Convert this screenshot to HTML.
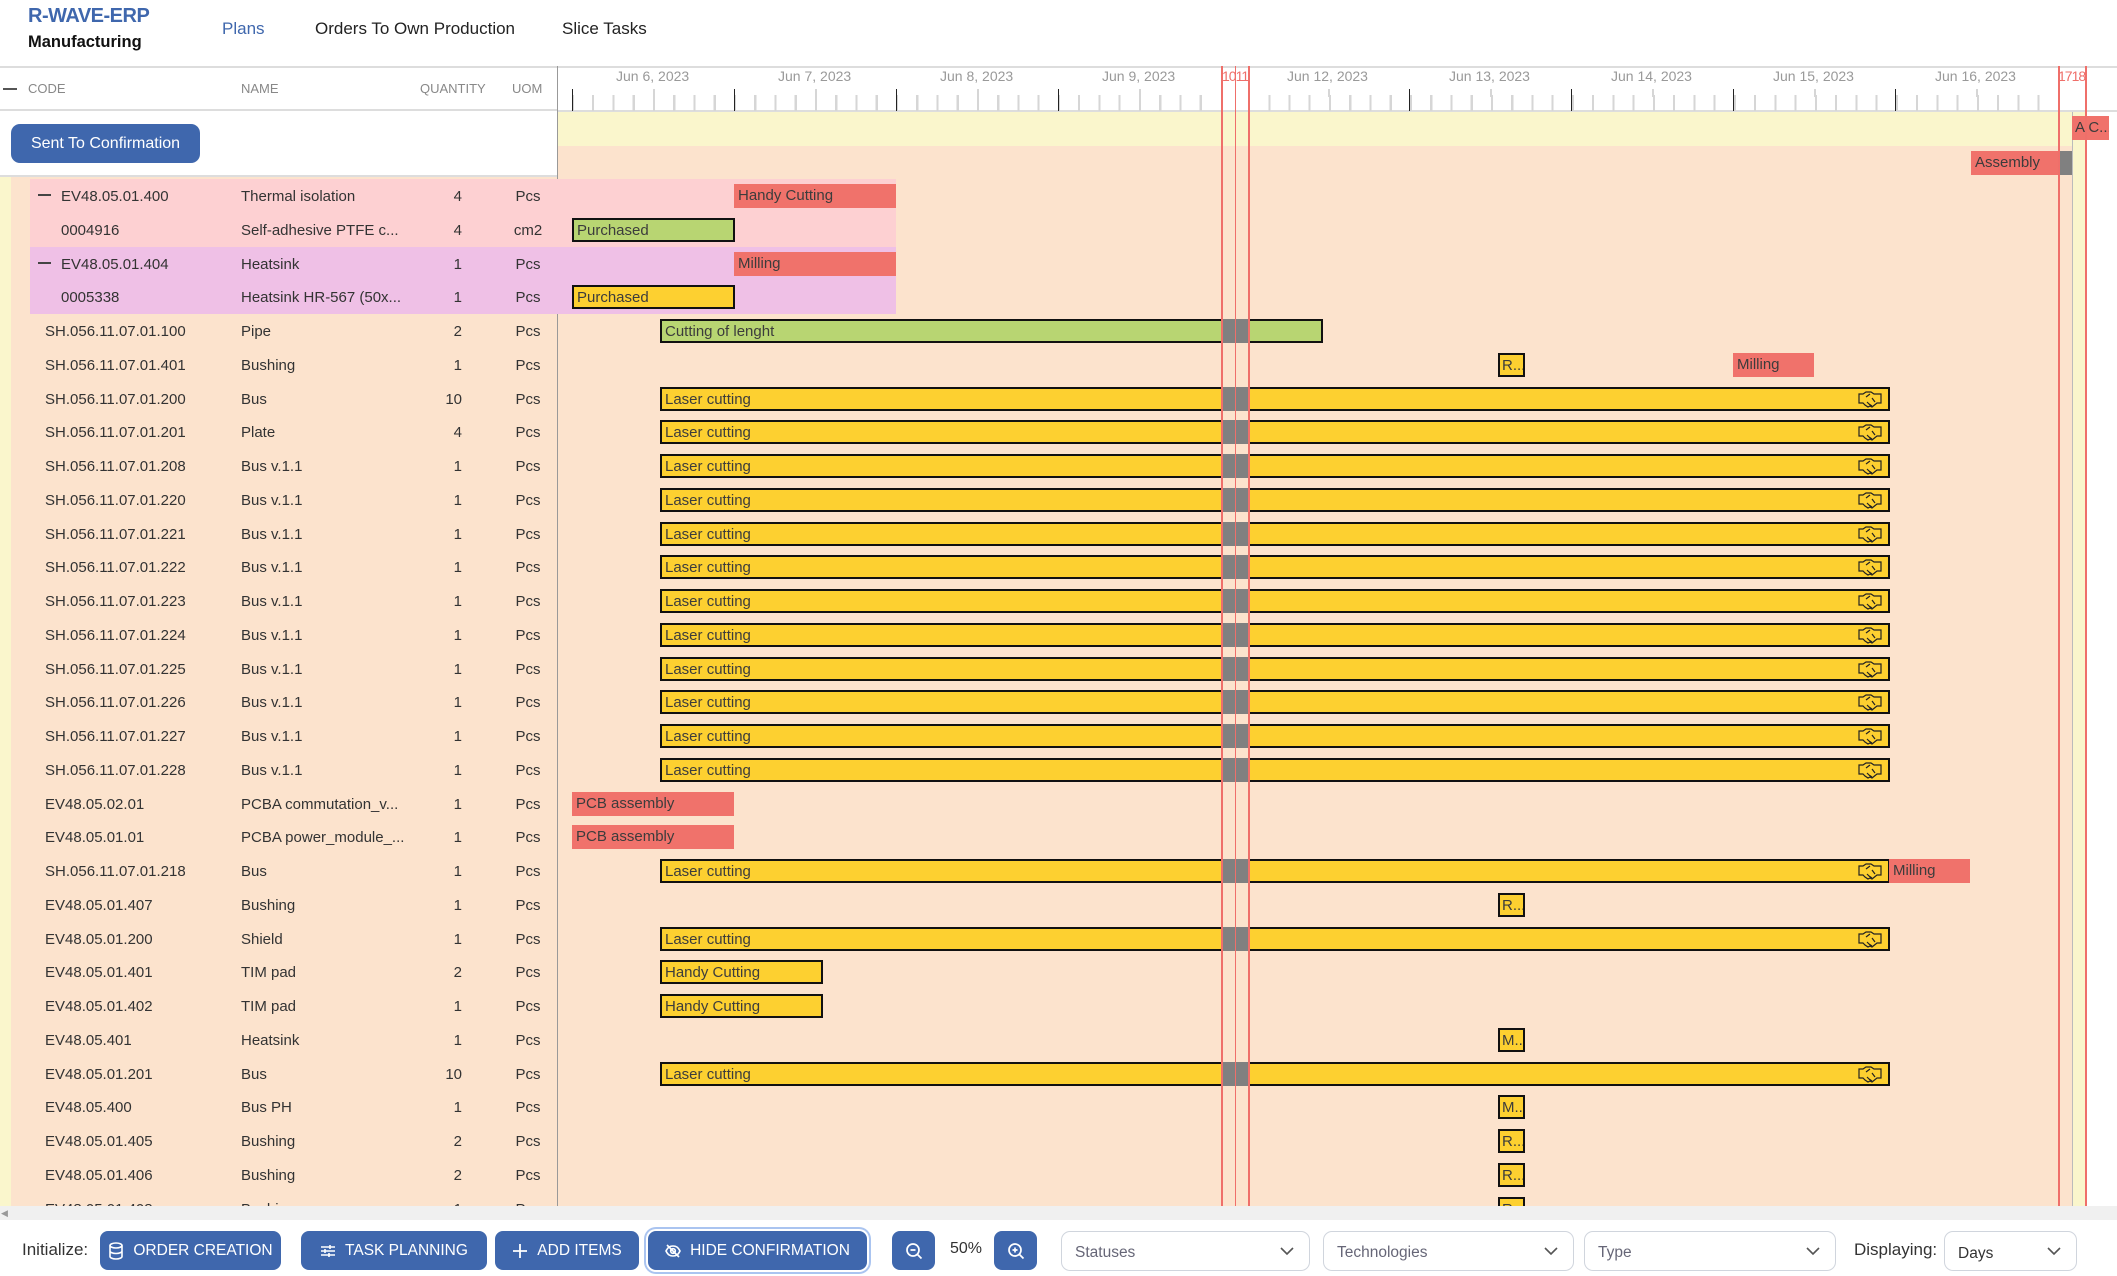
<!DOCTYPE html>
<html><head><meta charset="utf-8"><style>
*{box-sizing:border-box;margin:0;padding:0}
body{width:2117px;height:1276px;overflow:hidden;background:#fff;font-family:"Liberation Sans",sans-serif;position:relative;color:#333}
.a{position:absolute;white-space:nowrap}
.nav{font-size:17px;color:#222;top:19px}
.hl{font-size:13px;color:#888;top:81px}
.row{position:absolute;left:0;width:557px;height:33.75px;font-size:15px;color:#333}
.row span{position:absolute;top:9px;white-space:nowrap}
.c{left:45px}.cd{left:61px}.n{left:241px}.q{right:95px;text-align:right}.u{left:528px;transform:translateX(-50%)}
.bar{position:absolute;height:24px;font-size:15px;color:#3c3c3c;padding:3px 0 0 4px;white-space:nowrap;overflow:hidden}
.y{background:#fdd030;border:2px solid #111;padding-top:2px;padding-left:3px}
.g{background:#b8d572;border:2px solid #111;padding-top:2px;padding-left:3px}
.r{background:#f0726b}
.gb{position:absolute;top:-2px;height:24px;left:730px;width:27px;background:#808080}
.hs{position:absolute;right:6px;top:2px}
.btn{position:absolute;top:1231px;height:39px;background:#3f67ad;color:#fff;border-radius:8px;font-size:15.5px;font-weight:500;display:flex;align-items:center;justify-content:center;gap:9px;text-transform:uppercase}
.sel{position:absolute;top:1231px;height:40px;border:1.5px solid #d0d5dd;border-radius:9px;font-size:15.5px;color:#667;padding:12px 0 0 13px}
.sel svg{position:absolute;right:14px;top:13px}
.vl{position:absolute;top:66px;height:1140px;width:2px;background:#ef6f6a}
</style></head><body>
<div class="a" style="left:28px;top:5px;font-size:20px;font-weight:bold;color:#3f67ad;letter-spacing:-0.5px">R-WAVE-ERP</div>
<div class="a" style="left:28px;top:33px;font-size:16.5px;font-weight:bold;color:#111">Manufacturing</div>
<div class="a nav" style="left:222px;color:#3f67ad">Plans</div>
<div class="a nav" style="left:315px">Orders To Own Production</div>
<div class="a nav" style="left:562px">Slice Tasks</div>
<div class="a" style="left:0;top:66px;width:2117px;height:2px;background:#ddd"></div>
<div class="a" style="left:3px;top:88px;width:14px;height:2px;background:#555"></div>
<div class="a hl" style="left:28px">CODE</div>
<div class="a hl" style="left:241px">NAME</div>
<div class="a hl" style="left:420px">QUANTITY</div>
<div class="a hl" style="left:512px">UOM</div>
<div class="a" style="left:0;top:109px;width:557px;height:2px;background:#ddd"></div>
<div class="a" style="left:11px;top:124px;width:189px;height:39px;background:#3f67ad;border-radius:9px;color:#fff;font-size:16px;text-align:center;line-height:39px">Sent To Confirmation</div>
<div class="a" style="left:0;top:175px;width:557px;height:2px;background:#ddd"></div>
<div class="a" style="left:0;top:177px;width:11px;height:1029px;background:#faf6cc"></div>
<div class="a" style="left:11px;top:177px;width:546px;height:1029px;background:#fce3cd"></div>
<div class="a" style="left:558px;top:112px;width:1514px;height:34px;background:#faf6cc"></div>
<div class="a" style="left:558px;top:146px;width:1514px;height:1060px;background:#fce3cd"></div>
<div class="a" style="left:2072px;top:112px;width:14px;height:1094px;background:#faf6cc;border-left:1px solid #bbb"></div>
<div class="a" style="left:557px;top:66px;width:1px;height:1140px;background:#999"></div>
<div class="a" style="left:558px;top:110px;width:1559px;height:2px;background:#ddd"></div>
<div class="a" style="left:572px;top:95px;width:648px;height:16px;background:repeating-linear-gradient(to right,#d6d6d6 0 2px,transparent 2px 20.25px)"></div>
<div class="a" style="left:1248px;top:95px;width:810px;height:16px;background:repeating-linear-gradient(to right,#d6d6d6 0 2px,transparent 2px 20.25px)"></div>
<div class="a" style="left:572px;top:89px;width:1px;height:22px;background:#222"></div>
<div class="a" style="left:734px;top:89px;width:1px;height:22px;background:#222"></div>
<div class="a" style="left:896px;top:89px;width:1px;height:22px;background:#222"></div>
<div class="a" style="left:1058px;top:89px;width:1px;height:22px;background:#222"></div>
<div class="a" style="left:1409px;top:89px;width:1px;height:22px;background:#222"></div>
<div class="a" style="left:1571px;top:89px;width:1px;height:22px;background:#222"></div>
<div class="a" style="left:1733px;top:89px;width:1px;height:22px;background:#222"></div>
<div class="a" style="left:1895px;top:89px;width:1px;height:22px;background:#222"></div>
<div class="a" style="left:653px;top:89px;width:2px;height:8px;background:#d6d6d6"></div>
<div class="a" style="left:815px;top:89px;width:2px;height:8px;background:#d6d6d6"></div>
<div class="a" style="left:977px;top:89px;width:2px;height:8px;background:#d6d6d6"></div>
<div class="a" style="left:1139px;top:89px;width:2px;height:8px;background:#d6d6d6"></div>
<div class="a" style="left:1328px;top:89px;width:2px;height:8px;background:#d6d6d6"></div>
<div class="a" style="left:1490px;top:89px;width:2px;height:8px;background:#d6d6d6"></div>
<div class="a" style="left:1652px;top:89px;width:2px;height:8px;background:#d6d6d6"></div>
<div class="a" style="left:1814px;top:89px;width:2px;height:8px;background:#d6d6d6"></div>
<div class="a" style="left:1976px;top:89px;width:2px;height:8px;background:#d6d6d6"></div>
<div class="a" style="top:68px;left:0;width:2117px;height:20px;font-size:14px;color:#999">
<span class="a" style="left:616px">Jun 6, 2023</span>
<span class="a" style="left:778px">Jun 7, 2023</span>
<span class="a" style="left:940px">Jun 8, 2023</span>
<span class="a" style="left:1102px">Jun 9, 2023</span>
<span class="a" style="left:1287px">Jun 12, 2023</span>
<span class="a" style="left:1449px">Jun 13, 2023</span>
<span class="a" style="left:1611px">Jun 14, 2023</span>
<span class="a" style="left:1773px">Jun 15, 2023</span>
<span class="a" style="left:1935px">Jun 16, 2023</span>
<span class="a" style="left:1222px;color:#ef6f6a;letter-spacing:-1px">1011</span>
<span class="a" style="left:2058px;color:#ef6f6a;letter-spacing:-1px">1718</span>
</div>
<div class="a" style="left:0;top:177px;width:2117px;height:1029px;overflow:hidden">
<div style="position:absolute;left:0;top:2px;width:2117px">
<div class="a" style="left:30px;top:0;width:866px;height:67.5px;background:#fdd0d2"></div>
<div class="a" style="left:30px;top:67.5px;width:866px;height:67.5px;background:#efc0e6"></div>
<div class="row" style="top:0"><div class="a" style="left:38px;top:15px;width:13px;height:2px;background:#444"></div><span class="cd">EV48.05.01.400</span><span class="n">Thermal isolation</span><span class="q">4</span><span class="u">Pcs</span></div>
<div class="row" style="top:33.75px"><span class="cd">0004916</span><span class="n">Self-adhesive PTFE c...</span><span class="q">4</span><span class="u">cm2</span></div>
<div class="row" style="top:67.5px"><div class="a" style="left:38px;top:15px;width:13px;height:2px;background:#444"></div><span class="cd">EV48.05.01.404</span><span class="n">Heatsink</span><span class="q">1</span><span class="u">Pcs</span></div>
<div class="row" style="top:101.25px"><span class="cd">0005338</span><span class="n">Heatsink HR-567 (50x...</span><span class="q">1</span><span class="u">Pcs</span></div>
<div class="row" style="top:135px"><span class="c">SH.056.11.07.01.100</span><span class="n">Pipe</span><span class="q">2</span><span class="u">Pcs</span></div>
<div class="row" style="top:168.75px"><span class="c">SH.056.11.07.01.401</span><span class="n">Bushing</span><span class="q">1</span><span class="u">Pcs</span></div>
<div class="row" style="top:202.5px"><span class="c">SH.056.11.07.01.200</span><span class="n">Bus</span><span class="q">10</span><span class="u">Pcs</span></div>
<div class="row" style="top:236.25px"><span class="c">SH.056.11.07.01.201</span><span class="n">Plate</span><span class="q">4</span><span class="u">Pcs</span></div>
<div class="row" style="top:270px"><span class="c">SH.056.11.07.01.208</span><span class="n">Bus v.1.1</span><span class="q">1</span><span class="u">Pcs</span></div>
<div class="row" style="top:303.75px"><span class="c">SH.056.11.07.01.220</span><span class="n">Bus v.1.1</span><span class="q">1</span><span class="u">Pcs</span></div>
<div class="row" style="top:337.5px"><span class="c">SH.056.11.07.01.221</span><span class="n">Bus v.1.1</span><span class="q">1</span><span class="u">Pcs</span></div>
<div class="row" style="top:371.25px"><span class="c">SH.056.11.07.01.222</span><span class="n">Bus v.1.1</span><span class="q">1</span><span class="u">Pcs</span></div>
<div class="row" style="top:405px"><span class="c">SH.056.11.07.01.223</span><span class="n">Bus v.1.1</span><span class="q">1</span><span class="u">Pcs</span></div>
<div class="row" style="top:438.75px"><span class="c">SH.056.11.07.01.224</span><span class="n">Bus v.1.1</span><span class="q">1</span><span class="u">Pcs</span></div>
<div class="row" style="top:472.5px"><span class="c">SH.056.11.07.01.225</span><span class="n">Bus v.1.1</span><span class="q">1</span><span class="u">Pcs</span></div>
<div class="row" style="top:506.25px"><span class="c">SH.056.11.07.01.226</span><span class="n">Bus v.1.1</span><span class="q">1</span><span class="u">Pcs</span></div>
<div class="row" style="top:540px"><span class="c">SH.056.11.07.01.227</span><span class="n">Bus v.1.1</span><span class="q">1</span><span class="u">Pcs</span></div>
<div class="row" style="top:573.75px"><span class="c">SH.056.11.07.01.228</span><span class="n">Bus v.1.1</span><span class="q">1</span><span class="u">Pcs</span></div>
<div class="row" style="top:607.5px"><span class="c">EV48.05.02.01</span><span class="n">PCBA commutation_v...</span><span class="q">1</span><span class="u">Pcs</span></div>
<div class="row" style="top:641.25px"><span class="c">EV48.05.01.01</span><span class="n">PCBA power_module_...</span><span class="q">1</span><span class="u">Pcs</span></div>
<div class="row" style="top:675px"><span class="c">SH.056.11.07.01.218</span><span class="n">Bus</span><span class="q">1</span><span class="u">Pcs</span></div>
<div class="row" style="top:708.75px"><span class="c">EV48.05.01.407</span><span class="n">Bushing</span><span class="q">1</span><span class="u">Pcs</span></div>
<div class="row" style="top:742.5px"><span class="c">EV48.05.01.200</span><span class="n">Shield</span><span class="q">1</span><span class="u">Pcs</span></div>
<div class="row" style="top:776.25px"><span class="c">EV48.05.01.401</span><span class="n">TIM pad</span><span class="q">2</span><span class="u">Pcs</span></div>
<div class="row" style="top:810px"><span class="c">EV48.05.01.402</span><span class="n">TIM pad</span><span class="q">1</span><span class="u">Pcs</span></div>
<div class="row" style="top:843.75px"><span class="c">EV48.05.401</span><span class="n">Heatsink</span><span class="q">1</span><span class="u">Pcs</span></div>
<div class="row" style="top:877.5px"><span class="c">EV48.05.01.201</span><span class="n">Bus</span><span class="q">10</span><span class="u">Pcs</span></div>
<div class="row" style="top:911.25px"><span class="c">EV48.05.400</span><span class="n">Bus PH</span><span class="q">1</span><span class="u">Pcs</span></div>
<div class="row" style="top:945px"><span class="c">EV48.05.01.405</span><span class="n">Bushing</span><span class="q">2</span><span class="u">Pcs</span></div>
<div class="row" style="top:978.75px"><span class="c">EV48.05.01.406</span><span class="n">Bushing</span><span class="q">2</span><span class="u">Pcs</span></div>
<div class="row" style="top:1012.5px"><span class="c">EV48.05.01.408</span><span class="n">Bushing</span><span class="q">1</span><span class="u">Pcs</span></div>
<div class="bar r" style="left:734px;top:5px;width:162px">Handy Cutting</div>
<div class="bar g" style="left:572px;top:38.75px;width:163px">Purchased</div>
<div class="bar r" style="left:734px;top:72.5px;width:162px">Milling</div>
<div class="bar y" style="left:572px;top:106.25px;width:163px">Purchased</div>
<div class="bar g" style="left:660px;top:140px;width:663px;overflow:visible">Cutting of lenght<div class="gb" style="left:559px"></div></div>
<div class="bar y" style="left:1498px;top:173.75px;width:27px;padding-left:2px">R...</div>
<div class="bar r" style="left:1733px;top:173.75px;width:81px">Milling</div>
<div class="bar y" style="left:660px;top:207.5px;width:1230px;overflow:visible">Laser cutting<div class="gb" style="left:559px"></div><svg class="hs" width="24" height="17" viewBox="0 0 24 17"><path d="M1 3h4l3-2h5l3 2h7v9h-4l-5 4-2-1-2 1-3-2-2-2H1z M8 6l4-3M11 13l3 2M9 11l3 3M14 7l3 4" fill="none" stroke="#222" stroke-width="1.2"/></svg></div>
<div class="bar y" style="left:660px;top:241.25px;width:1230px;overflow:visible">Laser cutting<div class="gb" style="left:559px"></div><svg class="hs" width="24" height="17" viewBox="0 0 24 17"><path d="M1 3h4l3-2h5l3 2h7v9h-4l-5 4-2-1-2 1-3-2-2-2H1z M8 6l4-3M11 13l3 2M9 11l3 3M14 7l3 4" fill="none" stroke="#222" stroke-width="1.2"/></svg></div>
<div class="bar y" style="left:660px;top:275px;width:1230px;overflow:visible">Laser cutting<div class="gb" style="left:559px"></div><svg class="hs" width="24" height="17" viewBox="0 0 24 17"><path d="M1 3h4l3-2h5l3 2h7v9h-4l-5 4-2-1-2 1-3-2-2-2H1z M8 6l4-3M11 13l3 2M9 11l3 3M14 7l3 4" fill="none" stroke="#222" stroke-width="1.2"/></svg></div>
<div class="bar y" style="left:660px;top:308.75px;width:1230px;overflow:visible">Laser cutting<div class="gb" style="left:559px"></div><svg class="hs" width="24" height="17" viewBox="0 0 24 17"><path d="M1 3h4l3-2h5l3 2h7v9h-4l-5 4-2-1-2 1-3-2-2-2H1z M8 6l4-3M11 13l3 2M9 11l3 3M14 7l3 4" fill="none" stroke="#222" stroke-width="1.2"/></svg></div>
<div class="bar y" style="left:660px;top:342.5px;width:1230px;overflow:visible">Laser cutting<div class="gb" style="left:559px"></div><svg class="hs" width="24" height="17" viewBox="0 0 24 17"><path d="M1 3h4l3-2h5l3 2h7v9h-4l-5 4-2-1-2 1-3-2-2-2H1z M8 6l4-3M11 13l3 2M9 11l3 3M14 7l3 4" fill="none" stroke="#222" stroke-width="1.2"/></svg></div>
<div class="bar y" style="left:660px;top:376.25px;width:1230px;overflow:visible">Laser cutting<div class="gb" style="left:559px"></div><svg class="hs" width="24" height="17" viewBox="0 0 24 17"><path d="M1 3h4l3-2h5l3 2h7v9h-4l-5 4-2-1-2 1-3-2-2-2H1z M8 6l4-3M11 13l3 2M9 11l3 3M14 7l3 4" fill="none" stroke="#222" stroke-width="1.2"/></svg></div>
<div class="bar y" style="left:660px;top:410px;width:1230px;overflow:visible">Laser cutting<div class="gb" style="left:559px"></div><svg class="hs" width="24" height="17" viewBox="0 0 24 17"><path d="M1 3h4l3-2h5l3 2h7v9h-4l-5 4-2-1-2 1-3-2-2-2H1z M8 6l4-3M11 13l3 2M9 11l3 3M14 7l3 4" fill="none" stroke="#222" stroke-width="1.2"/></svg></div>
<div class="bar y" style="left:660px;top:443.75px;width:1230px;overflow:visible">Laser cutting<div class="gb" style="left:559px"></div><svg class="hs" width="24" height="17" viewBox="0 0 24 17"><path d="M1 3h4l3-2h5l3 2h7v9h-4l-5 4-2-1-2 1-3-2-2-2H1z M8 6l4-3M11 13l3 2M9 11l3 3M14 7l3 4" fill="none" stroke="#222" stroke-width="1.2"/></svg></div>
<div class="bar y" style="left:660px;top:477.5px;width:1230px;overflow:visible">Laser cutting<div class="gb" style="left:559px"></div><svg class="hs" width="24" height="17" viewBox="0 0 24 17"><path d="M1 3h4l3-2h5l3 2h7v9h-4l-5 4-2-1-2 1-3-2-2-2H1z M8 6l4-3M11 13l3 2M9 11l3 3M14 7l3 4" fill="none" stroke="#222" stroke-width="1.2"/></svg></div>
<div class="bar y" style="left:660px;top:511.25px;width:1230px;overflow:visible">Laser cutting<div class="gb" style="left:559px"></div><svg class="hs" width="24" height="17" viewBox="0 0 24 17"><path d="M1 3h4l3-2h5l3 2h7v9h-4l-5 4-2-1-2 1-3-2-2-2H1z M8 6l4-3M11 13l3 2M9 11l3 3M14 7l3 4" fill="none" stroke="#222" stroke-width="1.2"/></svg></div>
<div class="bar y" style="left:660px;top:545px;width:1230px;overflow:visible">Laser cutting<div class="gb" style="left:559px"></div><svg class="hs" width="24" height="17" viewBox="0 0 24 17"><path d="M1 3h4l3-2h5l3 2h7v9h-4l-5 4-2-1-2 1-3-2-2-2H1z M8 6l4-3M11 13l3 2M9 11l3 3M14 7l3 4" fill="none" stroke="#222" stroke-width="1.2"/></svg></div>
<div class="bar y" style="left:660px;top:578.75px;width:1230px;overflow:visible">Laser cutting<div class="gb" style="left:559px"></div><svg class="hs" width="24" height="17" viewBox="0 0 24 17"><path d="M1 3h4l3-2h5l3 2h7v9h-4l-5 4-2-1-2 1-3-2-2-2H1z M8 6l4-3M11 13l3 2M9 11l3 3M14 7l3 4" fill="none" stroke="#222" stroke-width="1.2"/></svg></div>
<div class="bar r" style="left:572px;top:612.5px;width:162px">PCB assembly</div>
<div class="bar r" style="left:572px;top:646.25px;width:162px">PCB assembly</div>
<div class="bar y" style="left:660px;top:680px;width:1230px;overflow:visible">Laser cutting<div class="gb" style="left:559px"></div><svg class="hs" width="24" height="17" viewBox="0 0 24 17"><path d="M1 3h4l3-2h5l3 2h7v9h-4l-5 4-2-1-2 1-3-2-2-2H1z M8 6l4-3M11 13l3 2M9 11l3 3M14 7l3 4" fill="none" stroke="#222" stroke-width="1.2"/></svg></div>
<div class="bar r" style="left:1889px;top:680px;width:81px">Milling</div>
<div class="bar y" style="left:1498px;top:713.75px;width:27px;padding-left:2px">R...</div>
<div class="bar y" style="left:660px;top:747.5px;width:1230px;overflow:visible">Laser cutting<div class="gb" style="left:559px"></div><svg class="hs" width="24" height="17" viewBox="0 0 24 17"><path d="M1 3h4l3-2h5l3 2h7v9h-4l-5 4-2-1-2 1-3-2-2-2H1z M8 6l4-3M11 13l3 2M9 11l3 3M14 7l3 4" fill="none" stroke="#222" stroke-width="1.2"/></svg></div>
<div class="bar y" style="left:660px;top:781.25px;width:163px">Handy Cutting</div>
<div class="bar y" style="left:660px;top:815px;width:163px">Handy Cutting</div>
<div class="bar y" style="left:1498px;top:848.75px;width:27px;padding-left:2px">M...</div>
<div class="bar y" style="left:660px;top:882.5px;width:1230px;overflow:visible">Laser cutting<div class="gb" style="left:559px"></div><svg class="hs" width="24" height="17" viewBox="0 0 24 17"><path d="M1 3h4l3-2h5l3 2h7v9h-4l-5 4-2-1-2 1-3-2-2-2H1z M8 6l4-3M11 13l3 2M9 11l3 3M14 7l3 4" fill="none" stroke="#222" stroke-width="1.2"/></svg></div>
<div class="bar y" style="left:1498px;top:916.25px;width:27px;padding-left:2px">M...</div>
<div class="bar y" style="left:1498px;top:950px;width:27px;padding-left:2px">R...</div>
<div class="bar y" style="left:1498px;top:983.75px;width:27px;padding-left:2px">R...</div>
<div class="bar y" style="left:1498px;top:1017.5px;width:27px;padding-left:2px">R...</div>
</div></div>
<div class="bar r" style="left:1971px;top:151px;width:101px;padding-top:3px">Assembly<div class="a" style="right:0;top:0;width:12px;height:24px;background:#808080"></div></div>
<div class="bar r" style="left:2072px;top:116px;width:37px;padding-left:3px;padding-top:3px">A C...</div>
<div class="vl" style="left:1221px"></div>
<div class="vl" style="left:1235px;width:1px"></div>
<div class="vl" style="left:1248px"></div>
<div class="vl" style="left:2058px"></div>
<div class="vl" style="left:2085px"></div>
<div class="a" style="left:0;top:1206px;width:2117px;height:14px;background:#f0f0f0"></div>
<div class="a" style="left:1px;top:1208px;font-size:9px;color:#999">◀</div>
<div class="a" style="left:22px;top:1240px;font-size:17px;color:#333">Initialize:</div>
<div class="btn" style="left:100px;width:181px"><svg width="16" height="18" viewBox="0 0 16 18" fill="none" stroke="#fff" stroke-width="1.6"><ellipse cx="8" cy="3.5" rx="6" ry="2.5"/><path d="M2 3.5v11c0 1.4 2.7 2.5 6 2.5s6-1.1 6-2.5v-11M2 9c0 1.4 2.7 2.5 6 2.5S14 10.4 14 9"/></svg>ORDER CREATION</div>
<div class="btn" style="left:301px;width:186px"><svg width="16" height="16" viewBox="0 0 16 16" fill="none" stroke="#fff" stroke-width="1.6"><path d="M1 4h14M1 8h14M1 12h14M10 2v4M5 6v4M9 10v4"/></svg>TASK PLANNING</div>
<div class="btn" style="left:495px;width:144px"><svg width="16" height="16" viewBox="0 0 16 16" stroke="#fff" stroke-width="1.8"><path d="M8 1v14M1 8h14"/></svg>ADD ITEMS</div>
<div class="btn" style="left:648px;width:219px;box-shadow:0 0 0 2px #fff,0 0 0 4px #aac4f0"><svg width="16" height="16" viewBox="0 0 16 16" fill="none" stroke="#fff" stroke-width="1.6"><path d="M1 8c2-4 4-5 7-5s5 1 7 5c-2 4-4 5-7 5s-5-1-7-5zM2 2l12 12"/><circle cx="8" cy="8" r="2.3"/></svg>HIDE CONFIRMATION</div>
<div class="btn" style="left:892px;width:43px"><svg width="18" height="18" viewBox="0 0 18 18" fill="none" stroke="#fff" stroke-width="1.7"><circle cx="8" cy="8" r="6"/><path d="M12.5 12.5l4 4M5.5 8h5"/></svg></div>
<div class="a" style="left:950px;top:1240px;font-size:16px;color:#333">50%</div>
<div class="btn" style="left:994px;width:43px"><svg width="18" height="18" viewBox="0 0 18 18" fill="none" stroke="#fff" stroke-width="1.7"><circle cx="8" cy="8" r="6"/><path d="M12.5 12.5l4 4M5.5 8h5M8 5.5v5"/></svg></div>
<div class="sel" style="left:1061px;width:249px">Statuses<svg width="16" height="12" viewBox="0 0 16 12" fill="none" stroke="#555" stroke-width="1.6"><path d="M2 3l6 6 6-6"/></svg></div>
<div class="sel" style="left:1323px;width:251px">Technologies<svg width="16" height="12" viewBox="0 0 16 12" fill="none" stroke="#555" stroke-width="1.6"><path d="M2 3l6 6 6-6"/></svg></div>
<div class="sel" style="left:1584px;width:252px">Type<svg width="16" height="12" viewBox="0 0 16 12" fill="none" stroke="#555" stroke-width="1.6"><path d="M2 3l6 6 6-6"/></svg></div>
<div class="a" style="left:1854px;top:1240px;font-size:17px;color:#333">Displaying:</div>
<div class="sel" style="left:1944px;width:133px;color:#333;padding-top:13px">Days<svg width="16" height="12" viewBox="0 0 16 12" fill="none" stroke="#555" stroke-width="1.6"><path d="M2 3l6 6 6-6"/></svg></div>
</body></html>
